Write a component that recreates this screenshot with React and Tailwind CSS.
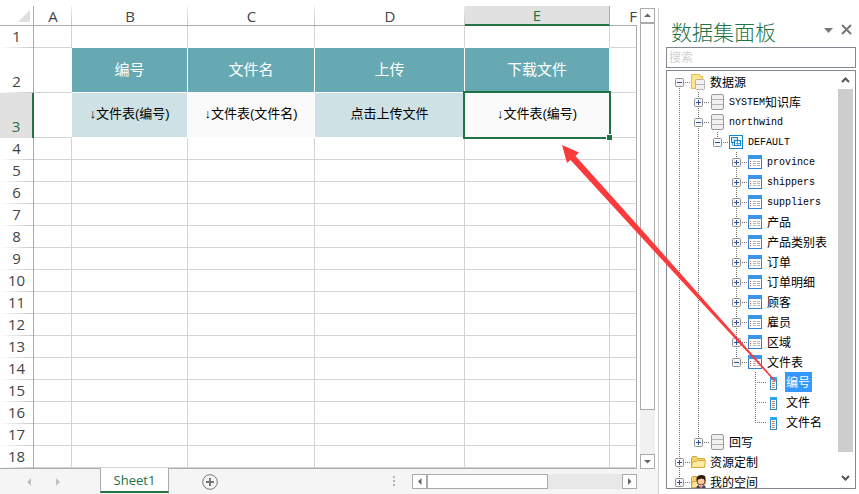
import React from 'react'

const rows = Array.from({ length: 18 }, (_, i) => i + 1)

const titles = ['编号', '文件名', '上传', '下载文件']
const values = ['↓文件表(编号)', '↓文件表(文件名)', '点击上传文件', '↓文件表(编号)']

// guides: for every ancestor level, whether its vertical line runs past this row
const tree = [
  { label: '数据源', icon: 'source', guides: [], state: 'open', first: true },
  { label: 'SYSTEM知识库', icon: 'db', guides: [1], state: 'closed' },
  { label: 'northwind', icon: 'db', guides: [1], state: 'open' },
  { label: 'DEFAULT', icon: 'schema', guides: [1, 1], state: 'open', last: true },
  { label: 'province', icon: 'table', guides: [1, 1, 0], state: 'closed' },
  { label: 'shippers', icon: 'table', guides: [1, 1, 0], state: 'closed' },
  { label: 'suppliers', icon: 'table', guides: [1, 1, 0], state: 'closed' },
  { label: '产品', icon: 'table', guides: [1, 1, 0], state: 'closed' },
  { label: '产品类别表', icon: 'table', guides: [1, 1, 0], state: 'closed' },
  { label: '订单', icon: 'table', guides: [1, 1, 0], state: 'closed' },
  { label: '订单明细', icon: 'table', guides: [1, 1, 0], state: 'closed' },
  { label: '顾客', icon: 'table', guides: [1, 1, 0], state: 'closed' },
  { label: '雇员', icon: 'table', guides: [1, 1, 0], state: 'closed' },
  { label: '区域', icon: 'table', guides: [1, 1, 0], state: 'closed' },
  { label: '文件表', icon: 'table', guides: [1, 1, 0], state: 'open', last: true },
  { label: '编号', icon: 'field', guides: [1, 1, 0, 0], selected: true },
  { label: '文件', icon: 'field', guides: [1, 1, 0, 0] },
  { label: '文件名', icon: 'field', guides: [1, 1, 0, 0], last: true },
  { label: '回写', icon: 'db', guides: [1], state: 'closed', last: true },
  { label: '资源定制', icon: 'folder', guides: [], state: 'closed' },
  { label: '我的空间', icon: 'user', guides: [], state: 'closed', last: true }
]

function Folder() {
  return (
    <>
      <path d="M1.500 13.500v-10l1-1h4l1 2h7v9z" fill="#f3d268" stroke="#d3a63c" />
      <path d="M1.500 13.500l1-6h4l1-1h8l-1 7z" fill="#fdeaa0" stroke="#d9ac40" />
    </>
  )
}

function NodeIcon({ type }) {
  return (
    <svg width="16" height="20" viewBox="0 -2 16 20" className="shrink-0">
      {type === 'source' && (
        <>
          <path d="M1.500 14.500v-14h8l1 2h2v12z" fill="#ffe48a" stroke="#e3bd52" />
          <rect x="5.500" y="5.500" width="9" height="10" rx="1" fill="#f1f1f1" stroke="#b5b5b5" />
          <path d="M6 10.500h8" stroke="#b5b5b5" />
        </>
      )}
      {type === 'db' && (
        <>
          <rect x="2.500" y=".5" width="12" height="15" rx="1.500" fill="#f0f0f0" stroke="#999" />
          <path d="M3 5.500h11M3 10.500h11" stroke="#b5b5b5" />
        </>
      )}
      {type === 'schema' && (
        <>
          <rect x="1.500" y="1.500" width="13" height="13" fill="#fff" stroke="#1287d0" />
          <rect x="3.500" y="3.500" width="6" height="5" fill="#d5e6f2" stroke="#1287d0" />
          <rect x="6.500" y="6.500" width="6" height="5" fill="#e4eef5" stroke="#1287d0" />
          <path d="M4.500 9v2.500h2M8 9.500h4M9.500 7v4" fill="none" stroke="#5aa9dc" />
        </>
      )}
      {type === 'table' && (
        <>
          <rect x="1.500" y="1.500" width="13" height="13" fill="#fff" stroke="#2f82cf" />
          <path d="M1 1h14v4H1z" fill="#3b95e6" />
          <path d="M3 7.500h1M3 9.500h1M3 11.500h1" stroke="#ee6a3c" />
          <path d="M6 7.500h3M10 7.500h3M6 9.500h3M10 9.500h3M6 11.500h3M10 11.500h3" stroke="#b5b5b5" />
        </>
      )}
      {type === 'field' && (
        <>
          <rect x="4.500" y="3.500" width="6" height="12" fill="#fff" stroke="#2b8cc9" />
          <path d="M4 3h7v3H4z" fill="#26a5f2" />
          <path d="M6 7.500h1M6 9.500h1M6 11.500h1M6 13.500h1" stroke="#ee6a3c" />
          <path d="M7 7.500h2M7 9.500h2M7 11.500h2M7 13.500h2" stroke="#9a9a9a" />
        </>
      )}
      {type === 'folder' && <Folder />}
      {type === 'user' && (
        <>
          <Folder />
          <path d="M6 15.500q0-4 3-4.500h4q3 .5 3 4.500z" fill="#33406a" />
          <path d="M9 11h4l-2 5z" fill="#fff" />
          <path d="M10.500 12h1l.5 4h-2z" fill="#e02020" />
          <circle cx="11" cy="7" r="4" fill="#f9c9a0" stroke="#7a3a1c" />
          <path d="M6.500 7V4q1-3 5-3t4 3v3q-1-2.500-4-2.500T6.500 7z" fill="#2a1a12" />
        </>
      )}
    </svg>
  )
}

function Branch({ node }) {
  return (
    <svg width="19" height="20" viewBox="0 0 19 20" className="block overflow-visible">
      <path
        d={`M9.500 ${node.first ? 10 : 0}V${node.last ? 10 : 20}M9 10.500H20`}
        stroke="#707070"
        strokeDasharray="1 1"
        fill="none"
      />
      {node.state && (
        <>
          <rect x="5.500" y="6.500" width="8" height="8" rx="1" fill="#f6f6f6" stroke="#919191" />
          <path d={node.state === 'closed' ? 'M7 10.500h5M9.500 8v5' : 'M7 10.500h5'} stroke="#2f4f9f" />
        </>
      )}
    </svg>
  )
}

function TreeRow({ node }) {
  const latin = node.label.match(/^[A-Za-z]*/)[0]
  return (
    <li className="flex h-5 items-center">
      {node.guides.map((on, i) => (
        <svg key={i} width="19" height="20" viewBox="0 0 19 20" className="shrink-0">
          {on === 1 && <path d="M9.500 0V20" stroke="#707070" strokeDasharray="1 1" />}
        </svg>
      ))}
      {node.state ? (
        <button className="mr-px shrink-0" aria-label={node.label}><Branch node={node} /></button>
      ) : (
        <span className="mr-px shrink-0"><Branch node={node} /></span>
      )}
      <NodeIcon type={node.icon} />
      <span className={`ml-[3px] flex h-5 items-center pt-px pr-[2px] pl-px whitespace-nowrap ${node.selected ? 'bg-[#3399ff] text-white' : 'text-black'}`}>
        {latin && <span className="font-['Liberation_Mono',monospace] text-[10px]">{latin}</span>}
        {node.label.slice(latin.length)}
      </span>
    </li>
  )
}

function ColumnHead({ children, active, last }) {
  if (active) {
    return <th scope="col" className="border-r border-b-2 border-r-[#ababab] border-b-[#217346] bg-[#e1e1e1] font-normal text-[#217346]">{children}</th>
  }
  return (
    <th
      scope="col"
      className={`border-b border-[#ababab] bg-[linear-gradient(to_bottom,#f0f0f0,#c8c8c8)] bg-[length:1px_100%] bg-right bg-no-repeat font-normal ${last ? 'bg-none text-right' : ''}`}
    >
      {children}
    </th>
  )
}

function RowHead({ n }) {
  const active = n === 3
  return (
    <th
      scope="row"
      className={`pb-[2px] align-bottom font-normal ${active
        ? 'border-r-2 border-[#217346] bg-[#e1e1e1] text-[#217346]'
        : 'border-r border-[#ababab] bg-[linear-gradient(to_right,#fff,#c8c8c8)] bg-[length:100%_1px] bg-bottom bg-no-repeat'}`}
    >
      {n}
    </th>
  )
}

function SheetRow({ n }) {
  const tall = n === 2 || n === 3
  return (
    <tr className={tall ? 'h-[45px]' : 'h-[22px]'}>
      <RowHead n={n} />
      <td className={`border-r border-b border-b-[#d4d4d4] ${tall ? 'border-r-white' : 'border-r-[#d4d4d4]'}`}></td>
      {titles.map((title, i) => {
        if (n === 2) {
          return <td key={i} className="border-r border-b border-white bg-[#66a9b2] pb-[2px] text-center text-white">{title}</td>
        }
        if (n === 3) {
          return (
            <td
              key={i}
              className={`border-r border-b border-white pb-[2px] text-center font-['Liberation_Sans','Noto_Sans_CJK_SC',sans-serif] text-[13px] text-black ${i % 2 ? 'bg-[#fafafa]' : 'bg-[#cee2e5]'} ${i === 3 ? 'relative' : ''}`}
            >
              {values[i]}
              {i === 3 && (
                <>
                  <span className="absolute -inset-0.5 border-2 border-[#217346]"></span>
                  <span className="absolute -right-1 -bottom-1 size-[7px] border border-white bg-[#217346]"></span>
                </>
              )}
            </td>
          )
        }
        return <td key={i} className={`border-r border-b border-r-[#d4d4d4] ${n === 1 ? 'border-b-white' : 'border-b-[#d4d4d4]'}`}></td>
      })}
      <td className="border-r border-b border-r-[#ababab] border-b-[#d4d4d4]"></td>
    </tr>
  )
}

function ScrollButton({ d, label }) {
  return (
    <button aria-label={label} className="size-[15px] shrink-0 border border-[#ababab] bg-white">
      <svg width="13" height="13" viewBox="0 0 13 13" fill="#666"><path d={d} /></svg>
    </button>
  )
}

function Sheet() {
  return (
    <main className="min-w-0 flex-1">
      <div className="flex">
        <div className="min-w-0 flex-1 border-b border-[#ababab] pt-[6px]">
          <table className="w-full table-fixed border-separate border-spacing-0 text-[15px] leading-5 text-[#444]">
            <colgroup>
              <col className="w-[34px]" />
              <col className="w-[38px]" />
              <col className="w-[116px]" />
              <col className="w-[127px]" />
              <col className="w-[150px]" />
              <col className="w-[145px]" />
              <col />
            </colgroup>
            <thead>
              <tr className="h-5 leading-[18px]">
                <td className="border-r border-b border-[#ababab] pr-[3px]">
                  <svg width="12" height="12" viewBox="0 0 12 12" className="ml-auto"><path d="M12 0v12H0z" fill="#dfdfdf" /></svg>
                </td>
                <ColumnHead>A</ColumnHead>
                <ColumnHead>B</ColumnHead>
                <ColumnHead>C</ColumnHead>
                <ColumnHead>D</ColumnHead>
                <ColumnHead active>E</ColumnHead>
                <ColumnHead last>F</ColumnHead>
              </tr>
            </thead>
            <tbody>
              {rows.map((n) => <SheetRow key={n} n={n} />)}
            </tbody>
          </table>
        </div>
        <div className="mr-[3px] ml-[3px] flex w-[15px] flex-col bg-[#f1f1f1]">
          <div className="h-2 bg-white"></div>
          <ScrollButton label="向上滚动" d="M3 8h7L6.500 4.500z" />
          <div className="h-[387px] border border-[#ababab] bg-white"></div>
          <div className="flex-1"></div>
          <ScrollButton label="向下滚动" d="M3 5h7L6.500 8.500z" />
        </div>
      </div>

      <div className="flex h-[25px] items-center bg-[#f5f5f5]">
        <div className="flex w-[100px] gap-[23px] pl-[26px]">
          <button aria-label="上一个工作表"><svg width="6" height="8" viewBox="0 0 6 8"><path d="M5 0v8L1 4z" fill="#c0c0c0" /></svg></button>
          <button aria-label="下一个工作表"><svg width="6" height="8" viewBox="0 0 6 8"><path d="M1 0v8l4-4z" fill="#c0c0c0" /></svg></button>
        </div>
        <button className="-mt-px h-[25px] w-[69px] self-start border-x border-b-2 border-x-[#ababab] border-b-[#217346] bg-white text-[13px] leading-5 text-[#217346]">Sheet1</button>
        <button aria-label="新建工作表" className="ml-[33px]">
          <svg width="16" height="16" viewBox="0 0 16 16" fill="none" stroke="#777">
            <circle cx="8" cy="8" r="7.300" />
            <path d="M8 4v8M4 8h8" strokeWidth="2" />
          </svg>
        </button>
        <svg width="3" height="11" viewBox="0 0 3 11" className="mr-4 ml-auto" fill="#b5b5b5"><path d="M0 0h2v2H0zM0 4h2v2H0zM0 8h2v2H0z" /></svg>
        <div className="mr-[21px] flex w-[225px] bg-[#e8e8e8]">
          <ScrollButton label="向左滚动" d="M8.500 3v7L5 6.500z" />
          <div className="w-[121px] border border-[#ababab] bg-white"></div>
          <div className="flex-1"></div>
          <ScrollButton label="向右滚动" d="M5 3v7l3.500-3.500z" />
        </div>
      </div>
    </main>
  )
}

function DatasetPanel() {
  return (
    <aside className="mt-2 w-[201px] shrink-0 border-l border-[#d0d0d0] pr-[3px] pl-[7px]">
      <div className="flex h-[39px] items-start pl-[5px]">
        <h2 className="pt-2 text-[21px] leading-8 font-light text-[#217346]">数据集面板</h2>
        <button aria-label="面板菜单" className="mt-5 ml-auto">
          <svg width="9" height="5" viewBox="0 0 9 5"><path d="M0 0h9L4.500 5z" fill="#777" /></svg>
        </button>
        <button aria-label="关闭" className="mt-4 mr-[4px] ml-2">
          <svg width="11" height="11" viewBox="0 0 11 11"><path d="M1 1l9 9M10 1l-9 9" stroke="#777" strokeWidth="2" /></svg>
        </button>
      </div>
      <input
        type="text"
        aria-label="搜索"
        placeholder="搜索"
        className="block h-[21px] w-full border border-[#828790] px-[2px] text-xs text-black placeholder:text-[#cfcfcf]"
      />
      <div className="mt-[2px] flex h-[419px] overflow-hidden border border-[#828790] pr-[2px]">
        <ul className="min-w-0 flex-1 pt-px pl-[3px] text-xs">
          {tree.map((node, i) => <TreeRow key={i} node={node} />)}
        </ul>
        <div className="flex w-[15px] shrink-0 flex-col">
          <button aria-label="向上" className="flex h-[18px] items-center justify-center">
            <svg width="9" height="6" viewBox="0 0 9 6"><path d="M1 5l3.500-3.500L8 5" fill="none" stroke="#555" strokeWidth="2" /></svg>
          </button>
          <div className="flex-1 bg-[#cdcdcd]"></div>
          <button aria-label="向下" className="flex h-9 items-center justify-center pt-4">
            <svg width="9" height="6" viewBox="0 0 9 6"><path d="M1 1l3.500 3.500L8 1" fill="none" stroke="#555" strokeWidth="2" /></svg>
          </button>
        </div>
      </div>
    </aside>
  )
}

export default function App() {
  return (
    <div className="relative flex bg-white font-['Open_Sans','Noto_Sans_CJK_SC',sans-serif]">
      <Sheet />
      <DatasetPanel />
      {/* drag arrow from the field to cell E3 */}
      <svg width="220" height="245" viewBox="560 142 220 245" className="pointer-events-none absolute top-[142px] right-[79px]">
        <path d="M562 145l17 7.500-3.500 3.500L642 230l62 70 72 81-1 1-74-80-64.500-70-66-72-3.500 3z" fill="#fb3b3b" />
      </svg>
    </div>
  )
}
